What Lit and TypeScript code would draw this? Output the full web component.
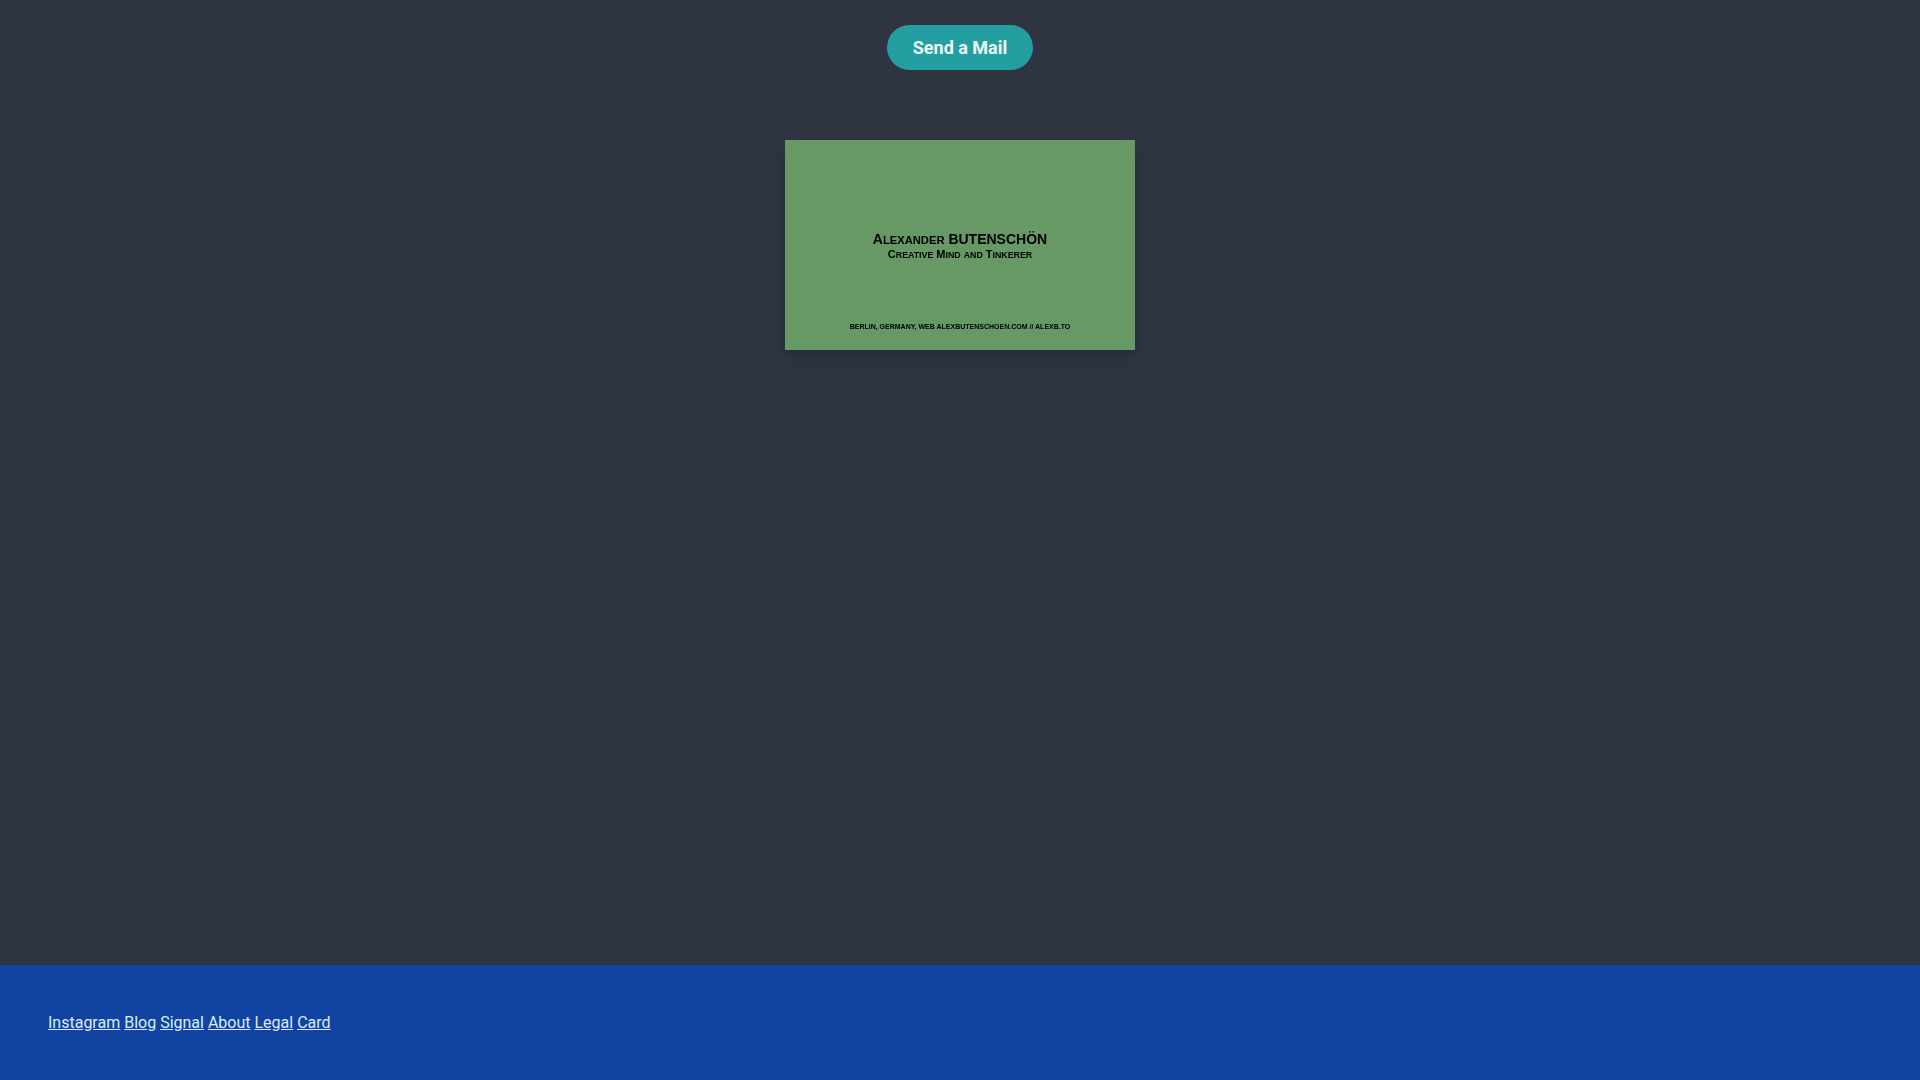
import { LitElement, html, css } from "lit";
import { customElement } from "lit/decorators.js";

const smallCaps = (text: string) =>
  (text.match(/[a-z]+|[^a-z]+/g) ?? []).map((run) =>
    /^[a-z]/.test(run) ? html`<span class="sc">${run}</span>` : run
  );

@customElement("app-root")
export class AppRoot extends LitElement {
  static styles = css`
    :host {
      display: flex;
      flex-direction: column;
      min-height: 1080px;
      background: #2e3440;
      font-family: Roboto, sans-serif;
      font-size: 16px;
    }
    main {
      flex: 1;
      display: flex;
      flex-direction: column;
      align-items: center;
      padding-top: 25px;
    }
    .btn {
      display: flex;
      align-items: center;
      justify-content: center;
      width: 146px;
      height: 45px;
      border-radius: 23px;
      background: #249fa1;
      color: #edf7f7;
      font-size: 18px;
      font-weight: 700;
      text-decoration: none;
    }
    .card {
      margin-top: 70px;
      width: 350px;
      height: 210px;
      box-sizing: border-box;
      background: #669966;
      box-shadow: 0 10px 15px -3px rgba(0, 0, 0, 0.14), 0 4px 6px -2px rgba(0, 0, 0, 0.06);
      display: flex;
      flex-direction: column;
      align-items: center;
      padding-top: 91px;
      font-family: "Liberation Sans", Arial, sans-serif;
      color: #000;
      font-weight: 700;
    }
    .sc {
      font-size: 0.8em;
      text-transform: uppercase;
    }
    .name {
      font-size: 14px;
      line-height: 16px;
      filter: blur(0.25px);
    }
    .role {
      font-size: 11px;
      line-height: 13px;
      filter: blur(0.25px);
    }
    .addr {
      margin-top: 60px;
      font-size: 7px;
      line-height: 10px;
      text-transform: uppercase;
      filter: blur(0.2px);
    }
    footer {
      height: 115px;
      box-sizing: border-box;
      background: #1144a0;
      padding: 0 48px;
      display: flex;
      align-items: center;
      color: #dbeafe;
    }
    footer a {
      color: #dbeafe;
      text-decoration: underline;
    }
  `;

  render() {
    const links = ["Instagram", "Blog", "Signal", "About", "Legal", "Card"];
    return html`
      <main>
        <a class="btn" href="#">Send a Mail</a>
        <div class="card">
          <div class="name">${smallCaps("Alexander BUTENSCHÖN")}</div>
          <div class="role">${smallCaps("Creative Mind and Tinkerer")}</div>
          <div class="addr">Berlin, Germany, Web alexbutenschoen.com // alexb.to</div>
        </div>
      </main>
      <footer>
        <div>${links.map((l) => html`<a href="#">${l}</a> `)}</div>
      </footer>
    `;
  }
}
